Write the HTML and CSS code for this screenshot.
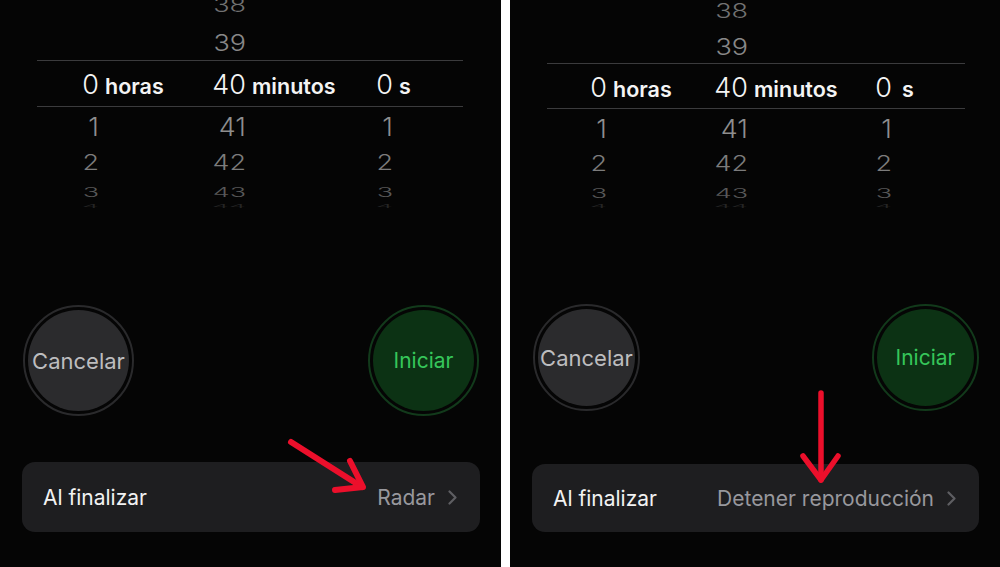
FILE: index.html
```html
<!DOCTYPE html>
<html lang="es">
<head>
<meta charset="utf-8">
<title>Temporizador</title>
<link rel="stylesheet" href="styles.css">
</head>
<body>
<main class="screen">

  <section class="panel panel-radar">
    <div class="picker">
      <div class="wheel-row row-top2"><div class="cell"></div><div class="cell"><span class="num">38</span></div><div class="cell"></div></div>
      <div class="wheel-row row-top1"><div class="cell"></div><div class="cell"><span class="num">39</span></div><div class="cell"></div></div>
      <div class="wheel-row row-sel">
        <div class="cell"><span class="num">0</span><span class="unit">horas</span></div>
        <div class="cell"><span class="num">40</span><span class="unit">minutos</span></div>
        <div class="cell"><span class="num">0</span><span class="unit unit-s">s</span></div>
      </div>
      <div class="wheel-row row-bot1"><div class="cell"><span class="num">1</span></div><div class="cell"><span class="num">41</span></div><div class="cell"><span class="num">1</span></div></div>
      <div class="wheel-row row-bot2"><div class="cell"><span class="num">2</span></div><div class="cell"><span class="num">42</span></div><div class="cell"><span class="num">2</span></div></div>
      <div class="wheel-row row-bot3"><div class="cell"><span class="num">3</span></div><div class="cell"><span class="num">43</span></div><div class="cell"><span class="num">3</span></div></div>
      <div class="wheel-row row-bot4"><div class="cell"><span class="num">4</span></div><div class="cell"><span class="num">44</span></div><div class="cell"><span class="num">4</span></div></div>
    </div>

    <div class="actions">
      <button class="round round-cancel">Cancelar</button>
      <button class="round round-start">Iniciar</button>
    </div>

    <div class="setting">
      <span class="setting-label">Al finalizar</span>
      <span class="setting-value">Radar</span>
      <svg class="chevron" viewBox="0 0 9 15" width="9" height="15"><polyline points="1.5,1.5 7.5,7.5 1.5,13.5"/></svg>
    </div>

    <svg class="marker" viewBox="0 0 501 567" width="501" height="567">
      <polyline points="291,442 362,487"/>
      <polyline points="335,490 363,487 350,461"/>
    </svg>
  </section>

  <section class="panel panel-stop">
    <div class="picker">
      <div class="wheel-row row-top2"><div class="cell"></div><div class="cell"><span class="num">38</span></div><div class="cell"></div></div>
      <div class="wheel-row row-top1"><div class="cell"></div><div class="cell"><span class="num">39</span></div><div class="cell"></div></div>
      <div class="wheel-row row-sel">
        <div class="cell"><span class="num">0</span><span class="unit">horas</span></div>
        <div class="cell"><span class="num">40</span><span class="unit">minutos</span></div>
        <div class="cell"><span class="num">0</span><span class="unit unit-s">s</span></div>
      </div>
      <div class="wheel-row row-bot1"><div class="cell"><span class="num">1</span></div><div class="cell"><span class="num">41</span></div><div class="cell"><span class="num">1</span></div></div>
      <div class="wheel-row row-bot2"><div class="cell"><span class="num">2</span></div><div class="cell"><span class="num">42</span></div><div class="cell"><span class="num">2</span></div></div>
      <div class="wheel-row row-bot3"><div class="cell"><span class="num">3</span></div><div class="cell"><span class="num">43</span></div><div class="cell"><span class="num">3</span></div></div>
      <div class="wheel-row row-bot4"><div class="cell"><span class="num">4</span></div><div class="cell"><span class="num">44</span></div><div class="cell"><span class="num">4</span></div></div>
    </div>

    <div class="actions">
      <button class="round round-cancel">Cancelar</button>
      <button class="round round-start">Iniciar</button>
    </div>

    <div class="setting">
      <span class="setting-label">Al finalizar</span>
      <span class="setting-value">Detener reproducción</span>
      <svg class="chevron" viewBox="0 0 9 15" width="9" height="15"><polyline points="1.5,1.5 7.5,7.5 1.5,13.5"/></svg>
    </div>

    <svg class="marker" viewBox="0 0 490 567" width="490" height="567">
      <polyline points="311,393 311,480"/>
      <polyline points="293,456 311,480 328,456"/>
    </svg>
  </section>

</main>
</body>
</html>
```

FILE: styles.css
```css
* { box-sizing: border-box; }

html, body {
  margin: 0;
  height: 100%;
  background: #ffffff;
}

body {
  font-family: Inter, "Noto Sans", "Liberation Sans", sans-serif;
  color: #f2f2f2;
}

.screen {
  display: flex;
  gap: 9px;
  width: 1000px;
  height: 567px;
}

/* one phone screen */
.panel {
  position: relative;
  overflow: hidden;
  display: flex;
  flex-direction: column;
  background: #050505;
  height: 567px;
}

.panel-radar {
  width: 501px;
  --pick-top: -16px;
  --pick-pad-l: 37px;
  --pick-pad-r: 38px;
  --cols: 147px 147px 1fr;
  --cell-l: 12px;
  --top1-h: 34px;
  --sel-h: 45px;
  --bot2-h: 34px;
  --bot3-h: 14px;
  --btn-top: 100px;
  --btn: 111px;
  --btn-r: 22px;
  --set-top: 46px;
  --set-h: 70px;
  --set-r: 21px;
}

.panel-stop {
  width: 490px;
  --pick-top: -10px;
  --pick-pad-l: 37px;
  --pick-pad-r: 35px;
  --cols: 141px 144px 1fr;
  --cell-l: 10px;
  --top1-h: 31px;
  --sel-h: 44px;
  --bot2-h: 33px;
  --bot3-h: 13px;
  --btn-top: 99px;
  --btn: 107px;
  --btn-r: 21px;
  --set-top: 53px;
  --set-h: 68px;
  --set-r: 21px;
}

/* timer wheel */
.picker {
  margin-top: var(--pick-top);
  padding: 0 var(--pick-pad-r) 0 var(--pick-pad-l);
}

.wheel-row {
  display: grid;
  grid-template-columns: var(--cols);
  padding-left: var(--cell-l);
  align-items: center;
}

.cell {
  display: flex;
  align-items: baseline;
  white-space: nowrap;
}

.num {
  display: inline-block;
  width: 50px;
  text-align: right;
  font-size: 27px;
  font-weight: 300;
  line-height: 1;
  color: #8c8c8c;
}

.unit {
  margin-left: 6px;
  font-size: 21.5px;
  font-weight: 600;
  line-height: 1;
  color: #f4f4f4;
}

.panel-stop .unit-s { margin-left: 10px; }

.row-top2 { height: 42px; }
.row-top2 .num { color: #727272; transform: scaleY(0.72); }

.row-top1 { height: var(--top1-h); }
.row-top1 .num { color: #888888; transform: scaleY(0.84); }

.row-sel {
  height: calc(var(--sel-h) + 2px);
  border-top: 1px solid #3b3b3d;
  border-bottom: 1px solid #3b3b3d;
  padding-top: 2px;
}
.row-sel .num { color: #f4f4f4; }

.row-bot1 { height: 38px; }
.row-bot1 .num { color: #8e8e8e; transform: scaleY(0.95); }

.row-bot2 { height: var(--bot2-h); }
.row-bot2 .num { color: #7c7c7c; transform: scaleY(0.78); }

.row-bot3 { height: var(--bot3-h); }
.row-bot3 .num { color: #585858; transform: scaleY(0.5); }

.row-bot4 { height: 8px; }
.row-bot4 .num { color: #252525; transform: scaleY(0.2); }

/* cancel / start buttons */
.actions {
  display: flex;
  justify-content: space-between;
  margin-top: calc(var(--btn-top) + 4px);
  padding: 0 var(--btn-r) 0 23px;
}

.round {
  width: var(--btn);
  height: var(--btn);
  border-radius: 50%;
  padding: 3px;
  background-clip: content-box;
  font-family: inherit;
  font-size: 22px;
  font-weight: 400;
  cursor: pointer;
}

.round-cancel {
  border: 2px solid #2a2a2c;
  background-color: #2b2b2d;
  color: #bdbdbf;
}

.round-start {
  border: 2px solid #123a1b;
  background-color: #0c3214;
  color: #36c65a;
  font-size: 21px;
}

/* "when finished" row */
.setting {
  display: flex;
  align-items: center;
  height: var(--set-h);
  margin: var(--set-top) var(--set-r) 0 22px;
  padding: 0 23px 0 21px;
  border-radius: 13px;
  background: #1e1e20;
  font-size: 21px;
}

.setting-label {
  flex: 1;
  color: #f2f2f2;
}

.setting-value {
  color: #98989d;
}

.chevron {
  margin-left: 13px;
  fill: none;
  stroke: #5e5e62;
  stroke-width: 2.2;
  stroke-linecap: round;
  stroke-linejoin: round;
}

/* red call-out arrow drawn over the screen */
.marker {
  position: absolute;
  left: 0;
  top: 0;
  pointer-events: none;
  fill: none;
  stroke: #ec0f2b;
  stroke-width: 6;
  stroke-linecap: round;
  stroke-linejoin: round;
}

.panel-stop .marker { stroke-width: 5.5; }
```
